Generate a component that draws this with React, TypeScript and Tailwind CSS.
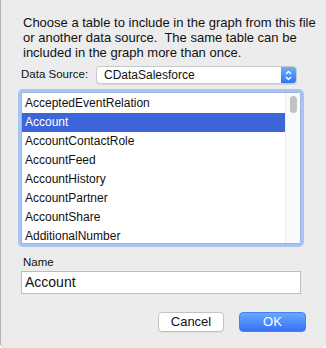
const tables = [
  "AcceptedEventRelation",
  "Account",
  "AccountContactRole",
  "AccountFeed",
  "AccountHistory",
  "AccountPartner",
  "AccountShare",
  "AdditionalNumber",
];

export default function App() {
  return (
    <div className="w-[326px] h-[348px] bg-[#ececec] border-l border-[#b2b2b2] rounded-bl-[5px] rounded-br-[5px] overflow-hidden font-['Liberation_Sans',Arial,sans-serif] text-[13px] text-[#111]">
      {/* Intro */}
      <p className="pt-[15px] pl-[22px] leading-[15px] whitespace-pre">
        {"Choose a table to include in the graph from this file\nor another data source.  The same table can be\nincluded in the graph more than once."}
      </p>

      {/* Data source popup */}
      <div className="flex items-center mt-[6px] pl-[20px]">
        <span className="w-[75px] shrink-0 whitespace-nowrap text-[11.5px]">Data Source:</span>
        <div className="flex w-[201px] h-[18px] rounded-[4px] bg-white border border-[#c9c9c9] shadow-[0_1px_0_rgba(0,0,0,0.08)] overflow-hidden">
          <span className="flex-1 pl-[7px] text-[12px] leading-[16px]">CDataSalesforce</span>
          <div className="w-[15px] bg-gradient-to-b from-[#6ab0fb] to-[#2f74f6] flex items-center justify-center">
            <svg width="7" height="11" viewBox="0 0 7 11" fill="none" stroke="white" strokeWidth="1.4">
              <path d="M1 4 L3.5 1.5 L6 4" />
              <path d="M1 7 L3.5 9.5 L6 7" />
            </svg>
          </div>
        </div>
      </div>

      {/* Table list */}
      <div className="mt-[8px] ml-[20px] w-[280px] h-[152px] rounded-[2px] border border-[#9db4e4] ring-[3px] ring-[#a8c4f2] bg-white flex overflow-hidden text-[12px]">
        <div className="flex-1 pt-[1px]">
          {tables.map((t, i) => (
            <div
              key={t}
              className={
                i === 1
                  ? "h-[19px] pl-[3px] leading-[19px] bg-[#3b65d8] text-white"
                  : "h-[19px] pl-[3px] leading-[19px]"
              }
            >
              {t}
            </div>
          ))}
        </div>
        <div className="w-[15px] border-l border-[#ececec] bg-[#fafafa] pt-[3px] flex justify-center">
          <div className="w-[7px] h-[17px] rounded-full bg-[#c2c2c2]" />
        </div>
      </div>

      {/* Name */}
      <div className="mt-[10px] pl-[22px] leading-[16px] text-[11.5px]">Name</div>
      <div className="mt-[1px] ml-[20px] w-[280px] h-[23px] bg-white border border-[#bdbdbd] pl-[3px] text-[14px] leading-[21px]">
        Account
      </div>

      {/* Buttons */}
      <div className="flex justify-end gap-[15px] mt-[18px] pr-[20px]">
        <button className="w-[66px] h-[20px] rounded-[4px] bg-white border border-[#c3c3c3] shadow-[0_1px_0_rgba(0,0,0,0.06)] text-[13px] leading-[18px]">
          Cancel
        </button>
        <button className="w-[67px] h-[20px] rounded-[4px] bg-gradient-to-b from-[#6aa9fb] to-[#3570f7] border border-[#4a7ef6] text-white text-[13px] leading-[18px]">
          OK
        </button>
      </div>
    </div>
  );
}
